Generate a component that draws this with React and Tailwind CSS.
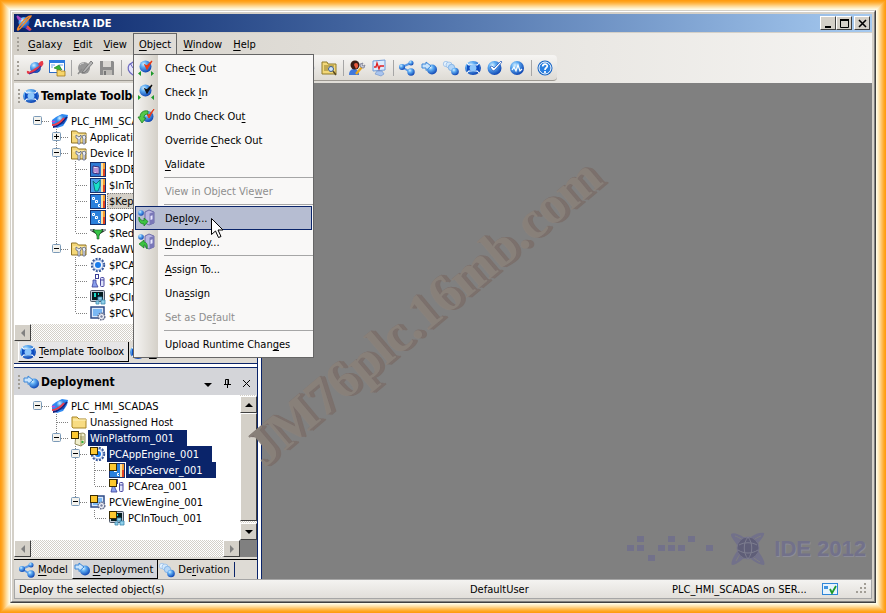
import React from 'react';

const icons = {
    logo: (
        <>
            <path d="M1 2c2-2 6 2 9 6 3 4 5 7 4 8-2 0-6-4-8-7C3 6 0 3 1 2z" fill="#a33bb8" />
            <circle cx="8" cy="7.500" r="5.500" fill="url(#ball)" />
            <path d="M15 1c-3 0-8 5-11 9-2 3-3 5-2 5 3-1 4-4 7-7 3-4 6-6 6-7z" fill="none" stroke="#f08a2c" strokeWidth="1.500" />
            <path d="M1 1l4 4" stroke="#b04ac8" strokeWidth="2" />
            <path d="M11 11l4 4" stroke="#e8503c" strokeWidth="2" />
        </>
    ),
    galaxy: (
        <>
            <circle cx="8.500" cy="7.500" r="5.500" fill="url(#ball)" />
            <path d="M1 11c-1 4 4 1 8-2 4-2 7-5 6-7-1 0-2 1-3 3" fill="none" stroke="#e83a48" strokeWidth="2.200" />
            <path d="M2 14c4-1 9-4 12-8" fill="none" stroke="#3a2a9c" strokeWidth="1.200" />
        </>
    ),
    galaxyTree: (
        <>
            <path d="M0 7l4-3 6-3 6 1-1 5-4 6-6 2-5-3z" fill="#2f8af2" />
            <circle cx="9" cy="7" r="4.500" fill="url(#ball)" />
            <path d="M0 8c1 1 2 1 3 0" fill="none" stroke="#d042c8" strokeWidth="1.500" />
            <path d="M1 14c4 0 9-4 14-10" fill="none" stroke="#16227e" strokeWidth="1.800" />
            <path d="M0 12c3 0 8-2 12-7" fill="none" stroke="#ee3a48" strokeWidth="2" />
        </>
    ),
    importWin: (
        <>
            <rect x=".5" y=".5" width="15" height="12" fill="#fff" stroke="#2d6cc8" />
            <path d="M0 0h16v3H0z" fill="#2d7be0" />
            <path d="M2 5h4M2 7h2M10 5h4" stroke="#6aa4e8" />
            <path d="M10 5L5 8l3 1c0 2 1 3 3 3V9l2 1z" fill="#35b335" stroke="#187818" strokeWidth=".6" />
            <path d="M8 10h3l1 1h4v5H8z" fill="#f7d56a" stroke="#a27a18" strokeWidth=".8" />
        </>
    ),
    penGray: (
        <>
            <circle cx="7" cy="8" r="6" fill="#969696" />
            <path d="M3 5a5 5 0 014-2" stroke="#d0d0d0" fill="none" />
            <path d="M6 11L14 1l2 2-8 9-3 1z" fill="#b5b5b5" stroke="#6f6f6f" strokeWidth=".8" />
            <path d="M1 14L5 9" stroke="#8a8a8a" strokeWidth="1.500" />
        </>
    ),
    save: (
        <>
            <path d="M1 1h13l1 1v13H1z" fill="#8c8c8c" />
            <path d="M4 1h8v6H4z" fill="#d9d7d3" />
            <path d="M4 10h9v5H4z" fill="#bcbab6" />
            <path d="M5 11h2v4H5z" fill="#777" />
        </>
    ),
    hand: (
        <>
            <path d="M2 5c-2 3-1 7 4 10h6V4L9 1 6 2z" fill="#e4e4fa" stroke="#6a68c0" strokeWidth="1.200" />
            <path d="M3 3l3 5M6 2l2 5" stroke="#6a68c0" />
        </>
    ),
    checkOut: (
        <>
            <circle cx="7.500" cy="6.500" r="6" fill="url(#ball)" />
            <path d="M7 5l2 4 5-8-5 5z" fill="#f0401c" stroke="#e83a18" strokeWidth="1.200" />
            <path d="M3 11v5l-3-2.500zM13 11v5l3-2.500z" fill="#1d9a2a" />
        </>
    ),
    checkIn: (
        <>
            <circle cx="7.500" cy="6.500" r="6" fill="url(#ball)" />
            <path d="M7 5l2 4 5-8-5 5z" fill="#111" stroke="#111" strokeWidth="1.200" />
            <path d="M0 11v5l3-2.500zM16 11v5l-3-2.500z" fill="#1d9a2a" />
        </>
    ),
    undoOut: (
        <>
            <circle cx="10" cy="8.500" r="5.500" fill="url(#ball)" />
            <path d="M9 6l2 4 5-9-5 6z" fill="#f0401c" stroke="#e83a18" strokeWidth="1" />
            <path d="M10 3C5 2 2 5 2 9H0l4 6 4-5H6c0-3 1-4 4-4z" fill="#55c84a" stroke="#1d7f20" strokeWidth=".8" />
        </>
    ),
    deploy: (
        <>
            <path d="M7 2l4-2 5 2v11l-5 2-4-2z" fill="#b9b7e2" stroke="#56549a" strokeWidth=".8" />
            <path d="M11.500 3.500L16 2v11l-4.500 2z" fill="#7a78b8" />
            <path d="M12.500 6l2-.7v4l-2 .7z" fill="#e8e8ff" />
            <circle cx="3" cy="3" r="2.800" fill="url(#ball)" />
            <path d="M1 7c-1 5 2 7 5 7v2l4-4.500L6 8v2.500C4 10.500 2 10 1 7z" fill="#3cc242" stroke="#157a1c" strokeWidth=".7" />
        </>
    ),
    undeploy: (
        <>
            <path d="M7 2l4-2 5 2v11l-5 2-4-2z" fill="#b9b7e2" stroke="#56549a" strokeWidth=".8" />
            <path d="M11.500 3.500L16 2v11l-4.500 2z" fill="#7a78b8" />
            <path d="M12.500 6l2-.7v4l-2 .7z" fill="#e8e8ff" />
            <circle cx="3" cy="3" r="2.800" fill="url(#ball)" />
            <path d="M9 15c1-5-1-7-3-7V6L1 10l5 4v-3c1 0 2 1 3 4z" fill="#3cc242" stroke="#157a1c" strokeWidth=".7" />
        </>
    ),
    folderFind: (
        <>
            <path d="M1 2h5l1 2h8v10H1z" fill="#f3d878" stroke="#8f7a28" />
            <path d="M3 6h10M3 8h4M3 10h4" stroke="#8f7a28" />
            <circle cx="10" cy="9" r="2.500" fill="#cfe4fa" stroke="#3a5a8a" />
            <path d="M12 11l3 4" stroke="#5a4a20" strokeWidth="1.500" />
        </>
    ),
    userTool: (
        <>
            <path d="M0 15c0-5 3-6 5-6s5 1 5 6z" fill="#3f78dc" />
            <circle cx="6" cy="5" r="4.500" fill="#3b1d14" />
            <path d="M5 5a2 2 0 014 0v2L7 9z" fill="#e8573a" />
            <path d="M7 14l6-7" stroke="#e9a820" strokeWidth="2.400" />
            <path d="M11 4c0 3 1 4 4 4l1-3-2 1-1-1 1-2z" fill="#c9ccd8" stroke="#70748a" strokeWidth=".7" />
        </>
    ),
    monitor: (
        <>
            <path d="M2 1l12-1v10l-12 1z" fill="#dcebfc" stroke="#6f9ad8" />
            <path d="M3 7h2l1-4 2 6 1-3h4" stroke="#e02020" strokeWidth="1.300" fill="none" />
            <path d="M6 11h5l2 3-3 2-6-2z" fill="#a9c4ee" stroke="#6a8fc8" strokeWidth=".6" />
        </>
    ),
    model: (
        <>
            <path d="M3 7l9-4M3 7l8 5" stroke="#5a9ae8" strokeWidth="2" />
            <circle cx="3" cy="7" r="3" fill="url(#ball)" />
            <circle cx="12" cy="3" r="2.500" fill="url(#ball)" />
            <circle cx="12" cy="12" r="3.700" fill="url(#ball)" />
        </>
    ),
    deployment: (
        <>
            <circle cx="11" cy="9.500" r="5" fill="url(#ball)" />
            <path d="M1 4h4V2l5 4-5 4.500V8H1z" fill="#c9e4fc" stroke="#3a86d8" />
        </>
    ),
    derivation: (
        <>
            <circle cx="3" cy="4" r="2.700" fill="#e4f1fd" stroke="#8fb9e6" strokeWidth=".7" />
            <circle cx="6" cy="5" r="3" fill="#d3e8fb" stroke="#8fb9e6" strokeWidth=".7" />
            <circle cx="8.500" cy="7.500" r="3.200" fill="#b4d6f8" stroke="#6fa5de" strokeWidth=".7" />
            <circle cx="12" cy="11.500" r="3.800" fill="url(#ball)" />
        </>
    ),
    template: (
        <>
            <ellipse cx="8" cy="8" rx="8" ry="7" fill="url(#ball)" />
            <path d="M3 4.500c2 1 8 1 10 0l1 1v5l-1 1c-2-1-8-1-10 0l-1-1v-5z" fill="#0d4cc0" />
            <path d="M3 4.500c2 1 8 1 10 0M3 11.500c2-1 8-1 10 0" stroke="#d8ecff" strokeWidth="1.200" fill="none" />
            <ellipse cx="8" cy="8" rx="3.500" ry="3" fill="#8cc6fb" />
            <path d="M2 3l2 2.500M14 3l-2 2.500M2 13l2-2.500M14 13l-2-2.500" stroke="#fff" />
        </>
    ),
    penBall: (
        <>
            <circle cx="7.500" cy="8" r="7" fill="url(#ball)" />
            <path d="M3 7l3 4 2-1L15 2l-1-1-7 7-2-2z" fill="#fff" stroke="#1850b8" strokeWidth=".7" />
        </>
    ),
    wave: (
        <>
            <circle cx="8" cy="8" r="7" fill="url(#ball)" />
            <path d="M3 10l2-3 2 4 2-6 2 6 2-2" stroke="#fff" strokeWidth="1.200" fill="none" />
        </>
    ),
    help: (
        <>
            <circle cx="8" cy="8" r="7.500" fill="#1463c4" />
            <circle cx="8" cy="8" r="6" fill="#2a7fe0" stroke="#fff" />
            <path d="M5.700 6.500c0-3 4.600-3 4.600-.5C10.300 8 8 7.500 8 10M8 11v2" stroke="#fff" strokeWidth="1.700" fill="none" />
        </>
    ),
    folder: (
        <>
            <path d="M1 3h5l2 2h7v9H2l-1-1z" fill="#f8dc82" stroke="#a88524" />
            <path d="M2 6h13" stroke="#fff3c0" />
        </>
    ),
    folderTool: (
        <>
            <path d="M.500 2h5l2 2h7.500v10h-14.500z" fill="#f5d878" stroke="#8f7324" />
            <path d="M2 6h13" stroke="#fff3c0" />
            <path d="M5 6v3l2 1v5h2v-5l1-1V6L8 8zM11 7l3-1 1 3-1 1v5h-2v-5z" fill="#e8ecf4" stroke="#4c5878" strokeWidth=".7" />
        </>
    ),
    dde: (
        <>
            <rect x=".5" y="1.500" width="15" height="14" fill="#2f7ad4" stroke="#16306e" />
            <path d="M11 2h2v13h-2z" fill="#fbe0a0" />
            <path d="M13 2h2v6h-2z" fill="#f8a030" />
            <path d="M13 8h2v7h-2z" fill="#e04020" />
            <path d="M3 5l6 1v7l-6-1z" fill="#e6e0f8" stroke="#3a2878" />
            <path d="M5 7v4M7 7v5" stroke="#8a3ab0" />
        </>
    ),
    proxy: (
        <>
            <rect x=".5" y="1.500" width="15" height="14" fill="#4aa0e8" stroke="#16306e" />
            <path d="M11 2h2v13h-2z" fill="#fbe0a0" />
            <path d="M13 2h2v6h-2z" fill="#f8a030" />
            <path d="M13 8h2v7h-2z" fill="#e04020" />
            <path d="M3 4l3 3 4-4v6l-2 5H5l-1-5z" fill="#18e0c8" stroke="#0a5a6a" strokeWidth=".8" />
        </>
    ),
    opc: (
        <>
            <rect x=".5" y="1.500" width="15" height="14" fill="#2a80dc" stroke="#16306e" />
            <path d="M11 2h2v13h-2z" fill="#fbe0a0" />
            <path d="M13 2h2v6h-2z" fill="#f8a030" />
            <path d="M13 8h2v7h-2z" fill="#e04020" />
            <path d="M2.500 4.500h2v2h-2zM5.500 10V7.500h2v2h-2M10 11.500H8.500v2H10" fill="none" stroke="#fff" />
        </>
    ),
    redundant: (
        <>
            <path d="M1 4h3l4 3 4-3h3v2l-5 3-2 5-2-5-5-3z" fill="#2a3a30" />
            <path d="M3 5h10l-4 5v4H7v-4z" fill="#35c445" stroke="#1c5c28" strokeWidth=".6" />
            <path d="M0 4h3v2H0zM13 4h3v2h-3z" fill="#8a949c" />
        </>
    ),
    engine: (
        <>
            <circle cx="8" cy="8" r="6.200" fill="#f2f6fe" stroke="#3a5a9c" strokeWidth="2" strokeDasharray="2 1.250" />
            <circle cx="8" cy="8" r="5" fill="#f2f6fe" stroke="#6d8ac4" strokeWidth=".7" />
            <circle cx="8" cy="8" r="3" fill="#1a7bea" />
        </>
    ),
    area: (
        <>
            <path d="M3 7h3v3l2 4H2l1-4z" fill="#8aa0ec" stroke="#3a3f98" strokeWidth=".8" />
            <rect x="5.500" y="1.500" width="3" height="4" fill="#fff" stroke="#3a3f98" />
            <rect x="10.500" y="4.500" width="3.500" height="9" rx="1" fill="#dfe4fb" stroke="#4a48a0" />
            <path d="M11 7h3" stroke="#4a48a0" />
        </>
    ),
    intouch: (
        <>
            <rect x=".5" y="1.500" width="14" height="11" rx="1" fill="#c4ccd8" stroke="#4a5464" />
            <path d="M2 3h11v8H2z" fill="#041c20" />
            <path d="M4 4h2v4H4zM8 4h1v2H8z" fill="#18d8c8" />
            <path d="M8 8h4v3H8zM11 11h4v4h-4zM6 12h3v3H6z" fill="#8fd0ea" stroke="#3a86ac" strokeWidth=".8" />
        </>
    ),
    view: (
        <>
            <rect x="1" y="2" width="13" height="11" fill="#dce9fa" stroke="#2c4a86" strokeWidth="1.500" />
            <path d="M3 4h9v7H3z" fill="#7ab8f4" />
            <circle cx="11.500" cy="11.500" r="3.300" fill="#f2f3f8" stroke="#555f80" strokeWidth="1.600" strokeDasharray="1.500 1" />
            <circle cx="11.500" cy="11.500" r="1.200" fill="#7880a0" />
        </>
    ),
    platform: (
        <>
            <path d="M5 4l7-1 2 1v9l-4 3-6-2z" fill="#f0eecb" stroke="#77703a" strokeWidth=".8" />
            <path d="M9 7h4M9 9h4M10 4v11" stroke="#8a8244" strokeWidth=".8" />
            <circle cx="11.500" cy="12" r="1.200" fill="#2fae3a" />
        </>
    ),
    status: (
        <>
            <rect x=".5" y="2.500" width="15" height="11" fill="#e8f4fd" stroke="#2f86d8" />
            <path d="M2 5h4v3H2z" fill="#3f93e0" />
            <path d="M8 8l2 4 4-7" stroke="#1f9a2a" strokeWidth="1.800" fill="none" />
        </>
    ),
};

function Icon({ name, badge }) {
    return (
        <svg viewBox="0 0 16 16" className="size-4 shrink-0 overflow-visible" aria-hidden="true">
            {icons[name]}
            {badge && <rect x=".5" y="1.500" width="7" height="7" fill="#fdc82f" stroke="#3a2c00" />}
        </svg>
    );
}

// "&" marks the access key, as in native menus
function Label({ text }) {
    const i = text.indexOf('&');
    if (i < 0) return <span>{text}</span>;
    return (
        <span className="pt-px">
            {text.slice(0, i)}
            <span className="underline underline-offset-2 [text-decoration-skip-ink:none]">{text[i + 1]}</span>
            {text.slice(i + 2)}
        </span>
    );
}

function Grip() {
    return (
        <svg viewBox="0 0 3 16" className="h-4 w-[3px] shrink-0" aria-hidden="true">
            {[1, 5, 9, 13].map((y) => (
                <rect key={y} x="0" y={y} width="2" height="2" fill="#a29e96" />
            ))}
        </svg>
    );
}

const menuItems = [
    { text: 'Chec&k Out', icon: 'checkOut' },
    { text: 'Check &In', icon: 'checkIn' },
    { text: 'Undo Check Ou&t', icon: 'undoOut' },
    { text: 'Override &Check Out' },
    { text: '&Validate' },
    null,
    { text: 'View in Object Vie&wer', disabled: true },
    null,
    { text: 'Dep&loy...', icon: 'deploy', active: true },
    { text: '&Undeploy...', icon: 'undeploy' },
    null,
    { text: '&Assign To...' },
    { text: 'Una&ssign' },
    { text: 'Set as De&fault', disabled: true },
    null,
    { text: 'Upload Runtime Chan&ges' },
];

function ObjectMenu() {
    return (
        <div
            role="menu"
            className="absolute left-0 top-full z-20 w-[181px] border border-[#666666] bg-[#f9f8f7] bg-[linear-gradient(90deg,#f5f4f2,#d4d0c8)] bg-[length:24px_100%] bg-no-repeat py-px"
        >
            {menuItems.map((item, i) =>
                item === null ? (
                    <div key={i} className="ml-[30px] h-[3px] py-px">
                        <div className="h-px bg-[#a6a6a6]" />
                    </div>
                ) : (
                    <button
                        key={i}
                        role="menuitem"
                        disabled={item.disabled}
                        className={`relative mx-px flex h-6 w-[177px] items-center border pl-[2px] text-left ${
                            item.active ? 'border-[#0a246a] bg-[#b6bdd2]' : 'border-transparent'
                        } ${item.disabled ? 'text-[#8e8e8e]' : 'text-black'}`}
                    >
                        <span className="w-[27px]">{item.icon && <Icon name={item.icon} />}</span>
                        <Label text={item.text} />
                        {item.active && (
                            <svg viewBox="0 0 12 20" className="absolute left-[75px] top-[11px] h-5 w-3" aria-hidden="true">
                                <path d="M.5.5v16l4-3.500 3 6.500 2.500-1-3-6.500h5z" fill="#fff" stroke="#000" />
                            </svg>
                        )}
                    </button>
                )
            )}
        </div>
    );
}

function MenuBar() {
    return (
        <div className="flex h-[22px] items-center pl-[3px]">
            <Grip />
            <div className="ml-[3px] flex h-[21px] items-stretch gap-px self-start">
                {['&Galaxy', '&Edit', '&View', '&Object', '&Window', '&Help'].map((m) =>
                    m === '&Object' ? (
                        <div key={m} className="relative flex">
                            <button className="relative z-30 flex items-center border border-b-0 border-[#666666] bg-[#dfdcd7] px-[5px]">
                                <Label text={m} />
                            </button>
                            <ObjectMenu />
                        </div>
                    ) : (
                        <button key={m} className="flex items-center border-t border-transparent px-[5px]">
                            <Label text={m} />
                        </button>
                    )
                )}
            </div>
        </div>
    );
}

const tools = [
    'galaxy', 'importWin', null, 'penGray', 'save', null,
    'hand', 'checkOut', 'checkIn', null, 'deploy', 'undeploy', null, 'area', 'view', null, 'engine', 'folderFind', null,
    'userTool', 'monitor', null,
    'model', 'deployment', 'derivation', 'template', 'penBall', 'wave', null,
    'help',
];

function ToolBar() {
    return (
        <div className="flex h-[28px]">
            <div className="flex h-[26px] items-center rounded-r border-b border-[#9c9891] bg-linear-to-b from-[#f6f5f3] to-[#dedbd5] pl-[3px] pr-px">
                <Grip />
                <div className="ml-[4px] flex items-center">
                    {tools.map((t, i) =>
                        t === null ? (
                            <span key={i} className="flex w-[6px] justify-center">
                                <span className="h-4 w-px bg-[#a6a6a6]" />
                            </span>
                        ) : (
                            <button key={i} aria-label={t} className="flex w-[22px] justify-center">
                                <Icon name={t} />
                            </button>
                        )
                    )}
                </div>
            </div>
        </div>
    );
}

const templateRows = [
    { cells: ['root'], icon: 'galaxyTree', text: 'PLC_HMI_SCADAS' },
    { cells: ['', 'tee+'], icon: 'folderTool', text: 'Application' },
    { cells: ['', 'tee-'], icon: 'folderTool', text: 'Device Integration' },
    { cells: ['', 'line', 'tee'], icon: 'dde', text: '$DDESuiteLink' },
    { cells: ['', 'line', 'tee'], icon: 'proxy', text: '$InTouchProxy' },
    { cells: ['', 'line', 'tee'], icon: 'opc', text: '$KepServer', dim: true },
    { cells: ['', 'line', 'tee'], icon: 'opc', text: '$OPCClient' },
    { cells: ['', 'line', 'end'], icon: 'redundant', text: '$RedundantDI' },
    { cells: ['', 'end-'], icon: 'folderTool', text: 'ScadaWW' },
    { cells: ['', '', 'tee'], icon: 'engine', text: '$PCAppEngine' },
    { cells: ['', '', 'tee'], icon: 'area', text: '$PCArea' },
    { cells: ['', '', 'tee'], icon: 'intouch', text: '$PCInTouch' },
    { cells: ['', '', 'end'], icon: 'view', text: '$PCViewEngine' },
];

const deploymentRows = [
    { cells: ['root'], icon: 'galaxyTree', text: 'PLC_HMI_SCADAS' },
    { cells: ['', 'tee'], icon: 'folder', text: 'Unassigned Host' },
    { cells: ['', 'end-'], icon: 'platform', text: 'WinPlatform_001', badge: true, selected: true },
    { cells: ['', '', 'tee-'], icon: 'engine', text: 'PCAppEngine_001', badge: true, selected: true },
    { cells: ['', '', 'line', 'tee'], icon: 'opc', text: 'KepServer_001', badge: true, selected: true },
    { cells: ['', '', 'line', 'end'], icon: 'area', text: 'PCArea_001', badge: true },
    { cells: ['', '', 'end-'], icon: 'view', text: 'PCViewEngine_001', badge: true },
    { cells: ['', '', '', 'end'], icon: 'intouch', text: 'PCInTouch_001', badge: true },
];

function TreeCell({ type }) {
    const dots = { stroke: '#808080', strokeDasharray: '1 1' };
    const box = type === 'root' || type.endsWith('-') || type.endsWith('+');
    return (
        <svg viewBox="0 0 19 16" className="h-4 w-[19px] shrink-0 overflow-visible" aria-hidden="true">
            {(type.startsWith('tee') || type === 'line') && <path d="M9.500 0v16" {...dots} />}
            {type.startsWith('end') && <path d="M9.500 0v8" {...dots} />}
            {type !== '' && type !== 'line' && <path d="M10 8.500h11" {...dots} />}
            {box && (
                <>
                    <rect x="5.500" y="3.500" width="8" height="8" rx="1" fill="#f4f3ee" stroke="#7b9ab8" />
                    <path d="M7 7.500h5" stroke="#000" />
                    {type.endsWith('+') && <path d="M9.500 5v5" stroke="#000" />}
                </>
            )}
        </svg>
    );
}

function rowStyle(row) {
    if (row.selected) return 'border-[#0a246a] bg-[#0a246a] pr-[12px] text-white';
    if (row.dim) return 'border-dotted border-[#808080] bg-[#d4d0c8] pr-3';
    return 'border-transparent';
}

function Tree({ rows }) {
    return (
        <ul className="min-w-0 flex-1 overflow-hidden bg-white pl-[14px]">
            {rows.map((row) => (
                <li key={row.text} className="flex h-4 items-center whitespace-nowrap">
                    {row.cells.map((c, i) => (
                        <TreeCell key={i} type={c} />
                    ))}
                    <span className="ml-[5px] flex items-center gap-px">
                        <Icon name={row.icon} badge={row.badge} />
                        <span className={`h-4 border pl-px leading-4 ${rowStyle(row)}`}>{row.text}</span>
                    </span>
                </li>
            ))}
        </ul>
    );
}

const raised = 'border border-t-white border-l-white border-r-[#404040] border-b-[#404040] bg-[#d4d0c8]';
const checker = 'bg-[repeating-conic-gradient(#ffffff_0_25%,#d4d0c8_0_50%)] bg-[length:2px_2px]';

function ScrollButton({ label, d, color = '#000' }) {
    return (
        <button aria-label={label} className={`flex size-[17px] shrink-0 items-center justify-center ${raised}`}>
            <svg viewBox="0 0 8 8" className="size-2" aria-hidden="true">
                <path d={d} fill={color} />
            </svg>
        </button>
    );
}

function HScroll() {
    return (
        <div className={`flex h-[17px] flex-1 justify-between ${checker}`}>
            <ScrollButton label="Scroll left" d="M6 0v8L2 4z" color="#808080" />
            <ScrollButton label="Scroll right" d="M2 0v8l4-4z" color="#808080" />
        </div>
    );
}

function PanelTitle({ icon, text }) {
    return (
        <>
            <Grip />
            <span className="ml-[2px] flex items-center gap-[2px]">
                <Icon name={icon} />
                <h2 className="text-[12px] font-bold leading-4">{text}</h2>
            </span>
        </>
    );
}

function Tab({ icon, text, active, className = '' }) {
    return (
        <button
            className={`flex items-center gap-[3px] whitespace-nowrap pl-px pr-1 ${
                active ? 'border-b border-l border-r border-b-black border-l-white border-r-black' : ''
            } ${className}`}
        >
            <Icon name={icon} />
            <Label text={text} />
        </button>
    );
}

function SidePanels() {
    return (
        <aside className="flex w-[248px] shrink-0 flex-col border-r border-[#0a246a] bg-white pr-[3px]">
            <div className="flex flex-1 flex-col border-r border-[#0a246a] bg-[#dedbd5]">
                <section>
                    <div className="flex h-[26px] items-center bg-linear-to-b from-[#f6f5f3] to-[#dedbd5] pl-[4px]">
                        <PanelTitle icon="template" text="Template Toolbox" />
                    </div>
                    <div className="flex bg-white pb-[3px] pt-1">
                        <Tree rows={templateRows} />
                    </div>
                    <div className="flex">
                        <HScroll />
                    </div>
                    <div className="flex h-[22px] pb-px pl-1 pt-px">
                        <Tab icon="template" text="&Template Toolbox" active className="bg-[#e6e5e6]" />
                        <Tab icon="template" text="&Graphic Toolbox" />
                    </div>
                </section>

                <div className="h-[5px] shrink-0 border-y border-[#0a246a] bg-white" />

                <section className="flex flex-1 flex-col">
                    <div className="flex h-[27px] items-center bg-[#d4d5d9] pl-[4px]">
                        <PanelTitle icon="deployment" text="Deployment" />
                        <div className="ml-auto flex items-center gap-[11px] pr-[6px] pt-1">
                            <button aria-label="Options">
                                <svg viewBox="0 0 8 9" className="h-[9px] w-2" aria-hidden="true">
                                    <path d="M0 4h8L4 8z" fill="#000" />
                                </svg>
                            </button>
                            <button aria-label="Pin">
                                <svg viewBox="0 0 8 9" className="h-[9px] w-2" aria-hidden="true">
                                    <path d="M2.500 5V.5h3V5M5 0v5M1 5.500h7M4.500 5v4" stroke="#000" fill="none" />
                                </svg>
                            </button>
                            <button aria-label="Close panel">
                                <svg viewBox="0 0 9 9" className="size-[9px]" aria-hidden="true">
                                    <path d="M1 1l7 7M8 1L1 8" stroke="#000" />
                                </svg>
                            </button>
                        </div>
                    </div>
                    <div className="flex flex-1 bg-white">
                        <div className="flex flex-1 pt-[3px]">
                            <Tree rows={deploymentRows} />
                        </div>
                        <div className={`flex w-[17px] flex-col pt-px ${checker}`}>
                            <ScrollButton label="Scroll up" d="M0 6h8L4 2z" />
                            <div className={`mb-[2px] flex-1 ${raised}`} />
                            <ScrollButton label="Scroll down" d="M0 2h8L4 6z" />
                        </div>
                    </div>
                    <div className="flex">
                        <HScroll />
                        <div className="w-[17px] bg-[#808080]" />
                    </div>
                    <div className="mt-[2px] flex h-[20px] items-stretch border-t border-black pl-[4px]">
                        <Tab icon="model" text="&Model" />
                        <Tab icon="deployment" text="&Deployment" active className="bg-[#d4d5d9]" />
                        <Tab icon="derivation" text="De&rivation" />
                        <span className="my-[2px] w-px bg-[#0a246a]" />
                    </div>
                </section>
            </div>
        </aside>
    );
}

const pixelDots = [[0, 9], [10, 0], [10, 9], [21, 19], [31, 9], [41, 0], [41, 9], [51, 9], [61, 0], [79, 9]];

function Workspace() {
    return (
        <main className="relative flex flex-1 items-end justify-end bg-[#808080] pb-[13px] pr-[6px]">
            <div className="pointer-events-none absolute left-[161px] top-[229px] -translate-x-1/2 -translate-y-1/2">
                <p className="-rotate-[40deg] whitespace-nowrap font-['Liberation_Serif',serif] text-[53px] font-bold leading-none text-[#89827b]/90 [text-shadow:1px_0_0_#7b706c,2px_1px_0_#7c716d,3px_2px_0_#7c716d,4px_3px_0_#7a706c]">
                    JM76plc.16mb.com
                </p>
            </div>
            <div className="flex items-center text-[#72718a]">
                <svg viewBox="0 0 86 26" className="h-[26px] w-[86px]" aria-hidden="true">
                    {pixelDots.map(([x, y]) => (
                        <rect key={`${x}-${y}`} x={x} y={y} width="7" height="6" fill="currentColor" />
                    ))}
                </svg>
                <svg viewBox="0 0 34 34" className="ml-[18px] size-[34px]" aria-hidden="true">
                    <path d="M0 2C4-1 18 7 25 16c6 8 10 15 8 17-5 0-15-6-23-15C4 10-1 4 0 2z" fill="currentColor" />
                    <path d="M33 1C27-1 16 6 9 15 3 23-1 31 1 33c5 0 14-8 21-16C28 10 34 4 33 1z" fill="currentColor" />
                    <path d="M4 4c4 1 12 6 18 13M30 4C24 6 17 12 12 17M5 29c3-6 7-11 12-16M29 30c-4-2-9-6-13-11" stroke="#808080" fill="none" />
                    <circle cx="17" cy="16" r="11" fill="#5f5e78" stroke="#77768c" />
                    <path d="M8 13c5-3 13-3 18 0M7 18c6 4 14 4 20 0M17 5c-5 6-5 16 0 22M17 5c5 6 5 16 0 22" stroke="#7e7e90" fill="none" />
                </svg>
                <span className="ml-[9px] whitespace-nowrap font-['Liberation_Sans',Arial,sans-serif] text-[22px] font-bold leading-[34px] [text-shadow:1px_1px_0_#8c8c98]">
                    IDE 2012
                </span>
            </div>
        </main>
    );
}

function TitleBar() {
    return (
        <header className="flex h-[18px] items-center bg-linear-to-r from-[#0a246a] to-[#a6caf0] px-[2px]">
            <Icon name="logo" />
            <h1 className="ml-[2px] pt-px text-[11px] font-bold text-white">ArchestrA IDE</h1>
            <div className="ml-auto flex">
                <button aria-label="Minimize" className={`flex h-[14px] w-4 items-center justify-center ${raised}`}>
                    <svg viewBox="0 0 9 9" className="size-[9px]" aria-hidden="true">
                        <path d="M1 7h6v2H1z" />
                    </svg>
                </button>
                <button aria-label="Maximize" className={`flex h-[14px] w-4 items-center justify-center ${raised}`}>
                    <svg viewBox="0 0 9 9" className="size-[9px]" aria-hidden="true">
                        <path d="M.5 1v7.500h8V1M0 1h9" fill="none" stroke="#000" />
                        <path d="M0 0h9v2H0z" />
                    </svg>
                </button>
                <button aria-label="Close" className={`ml-[2px] flex h-[14px] w-4 items-center justify-center ${raised}`}>
                    <svg viewBox="0 0 9 9" className="size-[9px]" aria-hidden="true">
                        <path d="M1 1l7 7M8 1L1 8" stroke="#000" strokeWidth="1.600" />
                    </svg>
                </button>
            </div>
        </header>
    );
}

function StatusBar() {
    return (
        <footer className="flex h-[20px] shrink-0 items-center border border-[#a6a6a6] bg-linear-to-b from-[#f4f3f1] to-[#e2dfda] pl-1 pr-[2px]">
            <span className="flex-1 pt-px">Deploy the selected object(s)</span>
            <span className="w-[202px] pt-px">DefaultUser</span>
            <span className="w-[150px] whitespace-nowrap pt-px">PLC_HMI_SCADAS on SER...</span>
            <Icon name="status" />
            <svg viewBox="0 0 12 12" className="ml-[18px] mr-px size-3" aria-hidden="true">
                {[[8, 0], [8, 4], [4, 4], [8, 8], [4, 8], [0, 8]].map(([x, y]) => (
                    <rect key={`${x}-${y}`} x={x} y={y} width="2" height="2" fill="#a29e96" />
                ))}
            </svg>
        </footer>
    );
}

export default function App() {
    return (
        <div className="flex min-h-screen flex-col bg-[#fffbe6] p-[10px] font-['DejaVu_Sans_Condensed','Noto_Sans',sans-serif] text-[11px] leading-[14px] text-black shadow-[inset_0_0_0_1px_#ff9c12,inset_0_0_0_2px_#ffa41f,inset_0_0_0_3px_#ffad33,inset_0_0_0_4px_#ffb84c,inset_0_0_0_5px_#ffc466,inset_0_0_0_6px_#ffd183,inset_0_0_0_7px_#ffdd9e,inset_0_0_0_8px_#ffe8b8,inset_0_0_0_9px_#fff3d0]">
            <svg className="absolute size-0" aria-hidden="true">
                <defs>
                    <radialGradient id="ball" cx="35%" cy="30%" r="75%">
                        <stop offset="0" stopColor="#d6efff" />
                        <stop offset=".35" stopColor="#5cabf2" />
                        <stop offset="1" stopColor="#0a3fae" />
                    </radialGradient>
                </defs>
            </svg>
            <div className="flex flex-1 flex-col border border-b-[#404040] border-l-[#d4d0c8] border-r-[#404040] border-t-[#d4d0c8]">
                <div className="flex flex-1 flex-col border border-b-[#808080] border-l-white border-r-[#808080] border-t-white bg-[#d4d0c8] p-[2px]">
                    <TitleBar />
                    <div className="mt-px bg-linear-to-r from-[#d4d0c8] to-[#f5f4f2]">
                        <MenuBar />
                        <ToolBar />
                    </div>
                    <div className="flex flex-1">
                        <SidePanels />
                        <Workspace />
                    </div>
                    <StatusBar />
                </div>
            </div>
        </div>
    );
}
